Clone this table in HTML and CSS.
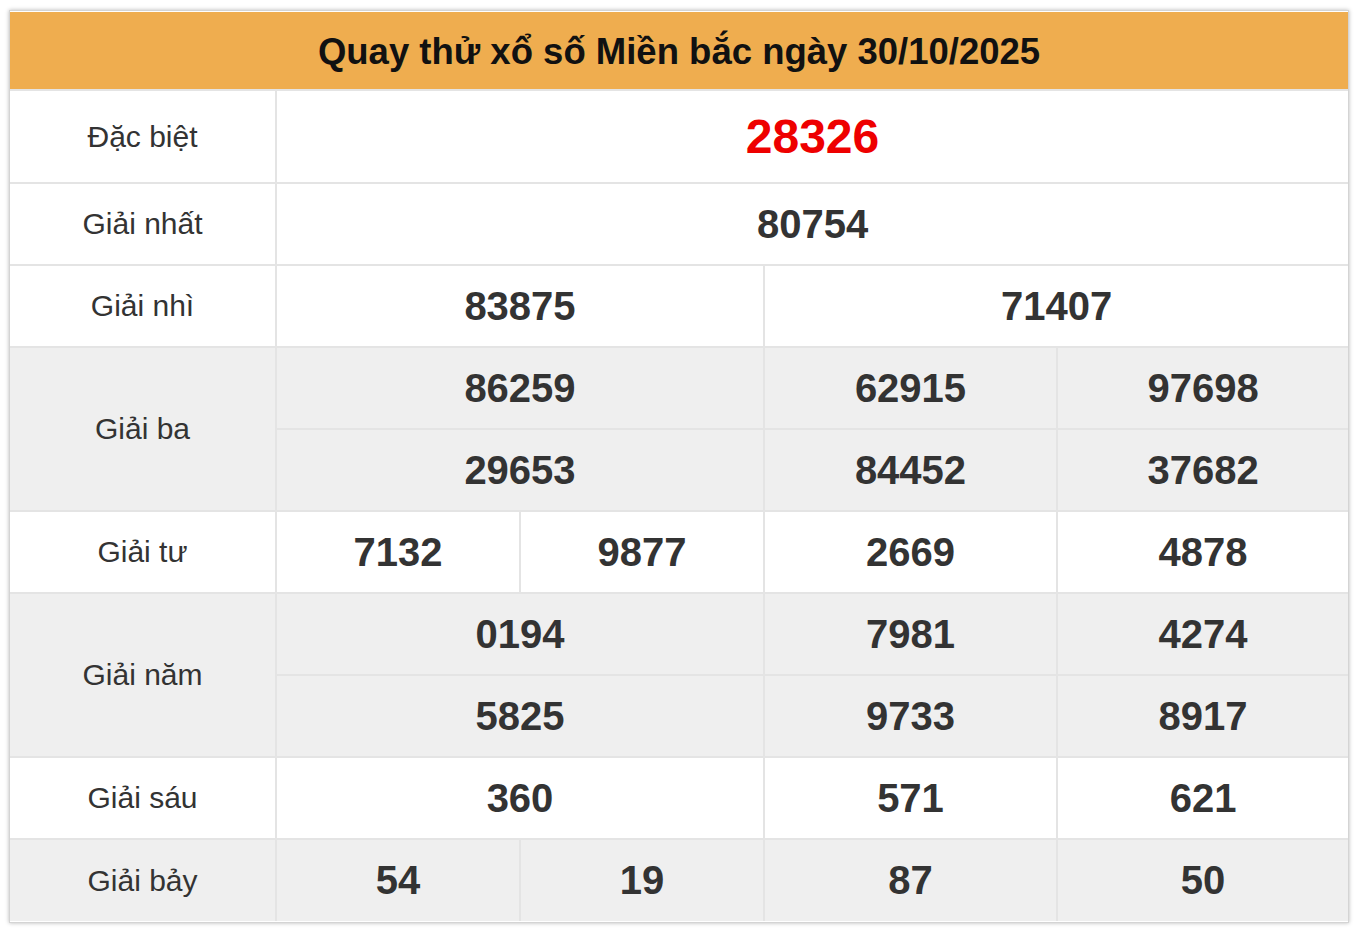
FILE: index.html
```html
<!DOCTYPE html>
<html lang="vi">
<head>
<meta charset="utf-8">
<title>Quay thử xổ số Miền bắc</title>
<link rel="stylesheet" href="styles.css">
</head>
<body>
<div class="box">
<table class="kq">
<colgroup>
<col class="c-label"><col class="c-a"><col class="c-b"><col class="c-c"><col class="c-d">
</colgroup>
<tr class="head"><td colspan="5">Quay thử xổ số Miền bắc ngày 30/10/2025</td></tr>
<tr class="r-db"><td class="lbl">Đặc biệt</td><td colspan="4" class="num db">28326</td></tr>
<tr><td class="lbl">Giải nhất</td><td colspan="4" class="num">80754</td></tr>
<tr><td class="lbl">Giải nhì</td><td colspan="2" class="num">83875</td><td colspan="2" class="num">71407</td></tr>
<tr class="alt"><td class="lbl" rowspan="2">Giải ba</td><td colspan="2" class="num">86259</td><td class="num">62915</td><td class="num">97698</td></tr>
<tr class="alt"><td colspan="2" class="num">29653</td><td class="num">84452</td><td class="num">37682</td></tr>
<tr><td class="lbl">Giải tư</td><td class="num">7132</td><td class="num">9877</td><td class="num">2669</td><td class="num">4878</td></tr>
<tr class="alt"><td class="lbl" rowspan="2">Giải năm</td><td colspan="2" class="num">0194</td><td class="num">7981</td><td class="num">4274</td></tr>
<tr class="alt"><td colspan="2" class="num">5825</td><td class="num">9733</td><td class="num">8917</td></tr>
<tr><td class="lbl">Giải sáu</td><td colspan="2" class="num">360</td><td class="num">571</td><td class="num">621</td></tr>
<tr class="alt"><td class="lbl">Giải bảy</td><td class="num">54</td><td class="num">19</td><td class="num">87</td><td class="num">50</td></tr>
</table>
</div>
</body>
</html>
```
FILE: styles.css
```css
html, body {
  margin: 0;
  padding: 0;
  background: #fff;
}
body {
  padding: 10px 9px;
  font-family: "Liberation Sans", Arial, sans-serif;
}
.box {
  width: 1338px;
  border: 1px solid #d4d4d4;
  padding: 1px 0;
  box-shadow: 0 0 4px rgba(0, 0, 0, 0.28);
  background: #fff;
}
.kq {
  width: 1338px;
  table-layout: fixed;
  border-collapse: collapse;
  border-style: hidden;
}
.c-label { width: 266px; }
.c-a { width: 244px; }
.c-b { width: 244px; }
.c-c { width: 293px; }
.c-d { width: 291px; }
.kq td {
  border: 2px solid #e4e4e4;
  text-align: center;
  vertical-align: middle;
  padding: 0;
  color: #333;
}
.kq tr { height: 82px; }
.kq tr.head { height: 78px; }
.kq tr.r-db { height: 93px; }
.head td {
  background: #efad4f;
  color: #111;
  font-weight: bold;
  font-size: 36.5px;
  padding-top: 3px;
  border: none;
}
.alt td { background: #efefef; }
.lbl {
  font-size: 30px;
}
.num {
  font-size: 40px;
  font-weight: bold;
}
.num.db {
  color: #ee0000;
  font-size: 48px;
}
```
